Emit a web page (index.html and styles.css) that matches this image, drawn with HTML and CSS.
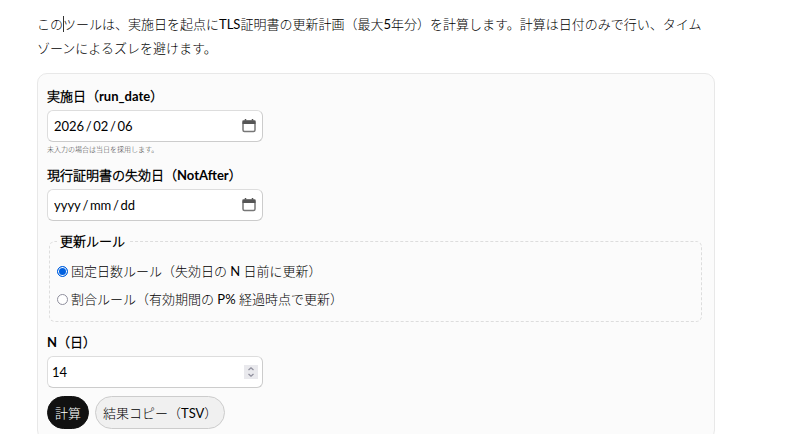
FILE: index.html
```html
<!DOCTYPE html>
<html lang="ja">
<head>
    <meta charset="UTF-8">
    <meta name="viewport" content="width=device-width, initial-scale=1.0">
    <title>TLS証明書 更新計画</title>
    <link rel="stylesheet" href="styles.css">
</head>
<body>
    <main>
        <p class="intro">このツールは、実施日を起点にTLS証明書の更新計画（最大5年分）を計算します。計算は日付のみで行い、タイムゾーンによるズレを避けます。</p>

        <form class="card">
            <div class="field">
                <label for="runDate">実施日（run_date）</label>
                <div class="control date">
                    <input type="text" id="runDate" value="2026&thinsp;/&thinsp;02&thinsp;/&thinsp;06">
                    <svg class="calendar" viewBox="0 0 14 14" aria-hidden="true">
                        <path d="M3.5 0v3M10.5 0v3" stroke="#555" stroke-width="1.5"/>
                        <rect x="1" y="2" width="12" height="10.5" rx="1.5" fill="none" stroke="#777" stroke-width="1.5"/>
                        <path d="M.5 1.5h13V5H.5z" fill="#555"/>
                    </svg>
                </div>
                <small class="hint">未入力の場合は当日を採用します。</small>
            </div>

            <div class="field">
                <label for="notAfter">現行証明書の失効日（NotAfter）</label>
                <div class="control date">
                    <input type="text" id="notAfter" placeholder="yyyy&thinsp;/&thinsp;mm&thinsp;/&thinsp;dd">
                    <svg class="calendar" viewBox="0 0 14 14" aria-hidden="true">
                        <path d="M3.5 0v3M10.5 0v3" stroke="#555" stroke-width="1.5"/>
                        <rect x="1" y="2" width="12" height="10.5" rx="1.5" fill="none" stroke="#777" stroke-width="1.5"/>
                        <path d="M.5 1.5h13V5H.5z" fill="#555"/>
                    </svg>
                </div>
            </div>

            <fieldset>
                <legend>更新ルール</legend>
                <label class="option"><input type="radio" name="rule" value="fixed" checked>固定日数ルール（失効日の N 日前に更新）</label>
                <label class="option"><input type="radio" name="rule" value="ratio">割合ルール（有効期間の P% 経過時点で更新）</label>
            </fieldset>

            <div class="field">
                <label for="days">N（日）</label>
                <div class="control number">
                    <input type="number" id="days" value="14">
                    <svg class="spinner" viewBox="0 0 14 14" aria-hidden="true">
                        <rect width="14" height="14" fill="#e9e9ed"/>
                        <path d="M4.5 5L7 2.8 9.5 5M4.5 9L7 11.2 9.5 9" fill="none" stroke="#8f8f9d" stroke-width="1.3"/>
                    </svg>
                </div>
            </div>

            <div class="actions">
                <button type="button" class="primary">計算</button>
                <button type="button">結果コピー（TSV）</button>
            </div>
        </form>
    </main>
</body>
</html>
```

FILE: styles.css
```css
* {
    box-sizing: border-box;
}

body {
    margin: 0;
    font-family: Lato, "Noto Sans CJK JP Light", "Noto Sans CJK JP", sans-serif;
    font-size: 13px;
    font-weight: 400;
    line-height: 24px;
    color: #000;
    background-color: #fff;
}

main {
    padding: 12px 85px 0 37px;
}

.intro {
    position: relative;
    margin: 0 0 13px;
    padding-right: 6px;
}

/* Text cursor after the second character */
.intro::before {
    content: "";
    position: absolute;
    top: 4px;
    left: 2em;
    width: 1px;
    height: 16px;
    background-color: #333;
}

.card {
    padding: 10px 12px 10px 9px;
    border: 1px solid #e8e8e8;
    border-radius: 10px;
    background-color: #fbfbfb;
}

.field {
    display: flex;
    flex-direction: column;
    align-items: flex-start;
    gap: 2px;
    margin-bottom: 8px;
}

.field > label,
legend {
    font-weight: 700;
}

/* Inputs */
.control {
    display: flex;
    align-items: center;
    width: 216px;
    max-width: 100%;
    height: 32px;
    padding: 0 6px;
    border: 1px solid #ccc;
    border-top-color: #ddd;
    border-left-color: #ddd;
    border-radius: 6px;
    background-color: #fff;
}

.number {
    padding: 0 4px;
}

.control input {
    flex: 1;
    min-width: 0;
    padding: 0;
    border: 0;
    outline: 0;
    background: none;
    font: inherit;
    color: #000;
    appearance: textfield;
}

.control input::placeholder {
    color: #000;
    opacity: 1;
}

.control input::-webkit-inner-spin-button {
    appearance: none;
}

.calendar,
.spinner {
    width: 14px;
    height: 14px;
}

.hint {
    font-size: 7px;
    line-height: 11px;
    color: #444;
}

/* Rule selection */
fieldset {
    margin: 0 0 8px 2px;
    padding: 4px 7px 8px;
    border: 1px dashed #ddd;
    border-radius: 6px;
}

legend {
    padding: 0 3px;
}

.option {
    display: flex;
    align-items: center;
    gap: 3px;
    height: 28px;
}

.option input {
    appearance: none;
    width: 11px;
    height: 11px;
    margin: 0;
    border: 1px solid #8f8f9d;
    border-radius: 50%;
    background-color: #fff;
}

.option input:checked {
    border-color: #0060df;
    background-color: #0060df;
    box-shadow: inset 0 0 0 1px #fff;
}

/* Buttons */
.actions {
    display: flex;
    gap: 6px;
}

button {
    height: 33px;
    padding: 0 7px;
    border: 1px solid #ccc;
    border-radius: 17px;
    background-color: #f0f0f0;
    font: inherit;
    color: #000;
}

.primary {
    border-color: #111;
    background-color: #111;
    color: #fff;
}
```
